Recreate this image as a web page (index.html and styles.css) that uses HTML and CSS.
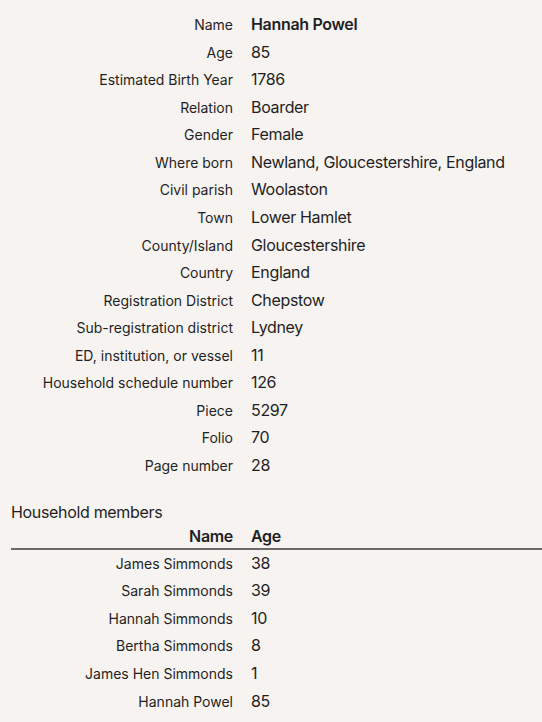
FILE: index.html
```html
<!DOCTYPE html>
<html>
<head>
<meta charset="utf-8">
<link rel="stylesheet" href="styles.css">
</head>
<body>
<div class="page">
  <dl class="facts">
    <dt>Name</dt><dd class="strong">Hannah Powel</dd>
    <dt>Age</dt><dd>85</dd>
    <dt>Estimated Birth Year</dt><dd>1786</dd>
    <dt>Relation</dt><dd>Boarder</dd>
    <dt>Gender</dt><dd>Female</dd>
    <dt>Where born</dt><dd>Newland, Gloucestershire, England</dd>
    <dt>Civil parish</dt><dd>Woolaston</dd>
    <dt>Town</dt><dd>Lower Hamlet</dd>
    <dt>County/Island</dt><dd>Gloucestershire</dd>
    <dt>Country</dt><dd>England</dd>
    <dt>Registration District</dt><dd>Chepstow</dd>
    <dt>Sub-registration district</dt><dd>Lydney</dd>
    <dt>ED, institution, or vessel</dt><dd>11</dd>
    <dt>Household schedule number</dt><dd>126</dd>
    <dt>Piece</dt><dd>5297</dd>
    <dt>Folio</dt><dd>70</dd>
    <dt>Page number</dt><dd>28</dd>
  </dl>
  <h2 class="section-title">Household members</h2>
  <table class="members">
    <thead>
      <tr><th class="name">Name</th><th class="age">Age</th></tr>
    </thead>
    <tbody>
      <tr><td class="name">James Simmonds</td><td class="age">38</td></tr>
      <tr><td class="name">Sarah Simmonds</td><td class="age">39</td></tr>
      <tr><td class="name">Hannah Simmonds</td><td class="age">10</td></tr>
      <tr><td class="name">Bertha Simmonds</td><td class="age">8</td></tr>
      <tr><td class="name">James Hen Simmonds</td><td class="age">1</td></tr>
      <tr><td class="name">Hannah Powel</td><td class="age">85</td></tr>
    </tbody>
  </table>
</div>
</body>
</html>
```

FILE: styles.css
```css
html, body {
  margin: 0;
  padding: 0;
  background: #f6f3f0;
}
body {
  font-family: Inter, "Liberation Sans", sans-serif;
  color: #1f1f24;
}
.page {
  padding: 11px 0 0 11px;
}
.facts {
  margin: 0;
  display: grid;
  grid-template-columns: 222px 1fr;
  column-gap: 18px;
  align-items: baseline;
}
.facts dt {
  text-align: right;
  font-size: 14px;
  line-height: 27.56px;
}
.facts dd {
  margin: 0;
  font-size: 16px;
  letter-spacing: -0.33px;
  line-height: 27.56px;
}
.facts dd.strong {
  font-weight: 600;
}
.section-title {
  margin: 20px 0 0 0;
  font-size: 16px;
  font-weight: 400;
  letter-spacing: -0.33px;
  line-height: 24px;
}
.members {
  border-collapse: collapse;
  width: 100%;
}
.members th {
  font-size: 16px;
  font-weight: 600;
  letter-spacing: -0.33px;
  line-height: 24px;
  padding: 0;
  border-bottom: 2px solid #6a6a6a;
}
.members td {
  padding: 0;
  line-height: 27.6px;
}
.members .name {
  width: 222px;
  text-align: right;
  padding-right: 18px;
}
.members td.name {
  font-size: 14px;
}
.members .age {
  text-align: left;
  font-size: 16px;
  letter-spacing: -0.33px;
}
```
